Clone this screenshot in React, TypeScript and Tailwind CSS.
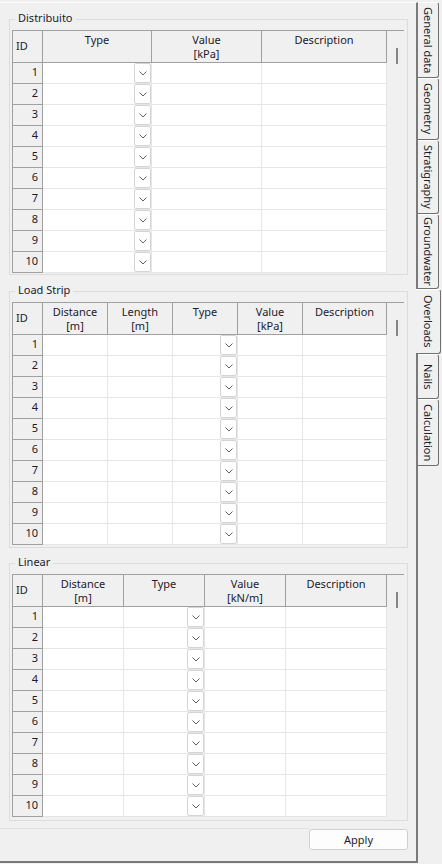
import React from "react";

interface Column {
  label: string;
  unit?: string;
  dropdown?: boolean;
}

interface TableSpec {
  title: string;
  grid: string;
  columns: Column[];
}

const tables: TableSpec[] = [
  {
    title: "Distribuito",
    grid: "grid-cols-[30px_109px_110px_125px]",
    columns: [
      { label: "Type", dropdown: true },
      { label: "Value", unit: "[kPa]" },
      { label: "Description" },
    ],
  },
  {
    title: "Load Strip",
    grid: "grid-cols-[30px_65px_65px_65px_65px_84px]",
    columns: [
      { label: "Distance", unit: "[m]" },
      { label: "Length", unit: "[m]" },
      { label: "Type", dropdown: true },
      { label: "Value", unit: "[kPa]" },
      { label: "Description" },
    ],
  },
  {
    title: "Linear",
    grid: "grid-cols-[30px_81px_81px_81px_101px]",
    columns: [
      { label: "Distance", unit: "[m]" },
      { label: "Type", dropdown: true },
      { label: "Value", unit: "[kN/m]" },
      { label: "Description" },
    ],
  },
];

const tabs = [
  { label: "General data", h: "h-[76px]" },
  { label: "Geometry", h: "h-[62px]" },
  { label: "Stratigraphy", h: "h-[74px]" },
  { label: "Groundwater", h: "h-[75px]" },
  { label: "Overloads", h: "h-[65px]", active: true },
  { label: "Nails", h: "h-[45px]" },
  { label: "Calculation", h: "h-[67px]" },
];

const rows = [1, 2, 3, 4, 5, 6, 7, 8, 9, 10];

function Chevron() {
  return (
    <svg width="8" height="5" viewBox="0 0 8 5">
      <path d="M0.5 0.5L4 4L7.5 0.5" fill="none" stroke="#606060" strokeWidth="1" />
    </svg>
  );
}

function DataTable({ spec }: { spec: TableSpec }) {
  return (
    <div className="flex w-[392px]">
      <div className="border-l border-[#a0a0a0]">
        <div className={`grid ${spec.grid} h-[33px] border-t border-b border-[#a0a0a0] bg-[#f0f0f0]`}>
          <div className="flex items-center pl-[3px] border-r border-[#a0a0a0]">ID</div>
          {spec.columns.map((c) => (
            <div key={c.label} className="border-r border-[#a0a0a0] text-center pt-[1.5px] leading-[14px]">
              <div>{c.label}</div>
              {c.unit && <div>{c.unit}</div>}
            </div>
          ))}
        </div>
        {rows.map((n) => (
          <div key={n} className={`grid ${spec.grid} h-[21px]`}>
            <div className="flex items-center justify-end pr-[4px] pb-[1px] bg-[#f0f0f0] border-r border-b border-[#a0a0a0]">
              {n}
            </div>
            {spec.columns.map((c) => (
              <div key={c.label} className="flex justify-end bg-white border-r border-b border-[#e6e6e6]">
                {c.dropdown && (
                  <div className="w-[17px] h-full flex items-center justify-center bg-white border border-[#d4d4d4] rounded-[2px]">
                    <Chevron />
                  </div>
                )}
              </div>
            ))}
          </div>
        ))}
      </div>
      <div className="w-[17px] border-t border-[#a0a0a0] bg-[#f0f0f0]">
        <div className="mt-[17px] ml-[9px] w-[2px] h-[16px] bg-[#858585]" />
      </div>
    </div>
  );
}

function GroupBox({ spec, className }: { spec: TableSpec; className: string }) {
  return (
    <div className={`relative ml-[9px] w-[399px] border border-[#dcdcdc] pt-[10px] pl-[2px] ${className}`}>
      <span className="absolute -top-[9px] left-[5px] px-[3px] leading-[14px] bg-[#f0f0f0]">{spec.title}</span>
      <DataTable spec={spec} />
    </div>
  );
}

export default function App() {
  return (
    <div className="w-[442px] h-[864px] bg-[#f0f0f0] flex text-[11px] text-[#1b1b2b] font-['Noto_Sans',sans-serif] overflow-hidden">
      <div className="mt-[2px] w-[418px] h-[861px] flex flex-col border-t border-r-2 border-b-2 border-[#7a7a7a] border-t-[#fcfcfc]">
        <GroupBox spec={tables[0]} className="mt-[16px] pb-[1px]" />
        <GroupBox spec={tables[1]} className="mt-[16px] pb-[2px]" />
        <GroupBox spec={tables[2]} className="mt-[15px] pb-[3px]" />
        <div className="mt-[7px] flex items-start">
          <div className="flex-1 border-t border-[#e0e0e0]" />
          <button className="mt-[1px] mr-[8px] w-[99px] h-[21px] bg-[#fdfdfd] border border-[#d0d0d0] rounded-[3px] leading-[14px]">
            Apply
          </button>
        </div>
      </div>
      <div className="pt-[2px] flex flex-col">
        {tabs.map((t) =>
          t.active ? (
            <div
              key={t.label}
              className={`relative -ml-[2px] w-[25px] ${t.h} flex items-center justify-center bg-[#f0f0f0] border-t border-r border-b border-t-white border-r-[#707070] border-b-[#707070] rounded-r-[3px]`}
            >
              <span className="[writing-mode:vertical-rl] leading-[14px]">{t.label}</span>
            </div>
          ) : (
            <div
              key={t.label}
              className={`w-[21px] ${t.h} flex items-center justify-center bg-[#f0f0f0] border-t border-r border-b border-t-white border-r-[#707070] border-b-[#707070] rounded-r-[3px]`}
            >
              <span className="[writing-mode:vertical-rl] leading-[14px]">{t.label}</span>
            </div>
          )
        )}
      </div>
    </div>
  );
}
